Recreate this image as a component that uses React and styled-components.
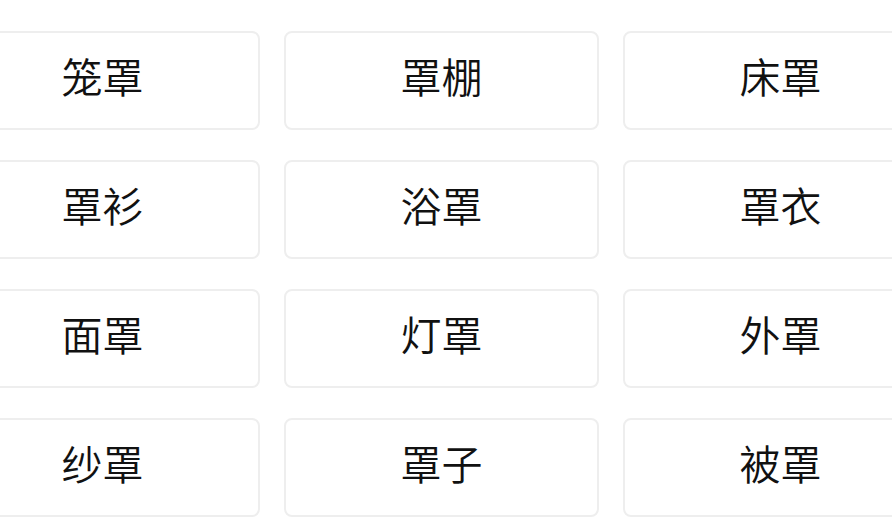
import React from 'react';
import styled, { createGlobalStyle } from 'styled-components';

const GlobalStyle = createGlobalStyle`
  html, body {
    margin: 0;
    padding: 0;
    background: #fff;
    overflow: hidden;
  }
  body {
    font-family: "Noto Sans CJK SC", "Noto Sans", sans-serif;
  }
`;

const Page = styled.div`
  width: 892px;
  height: 522px;
  overflow: hidden;
  background: #fff;
`;

const Grid = styled.div`
  display: grid;
  grid-template-columns: repeat(3, 315px);
  grid-auto-rows: 99px;
  column-gap: 24px;
  row-gap: 30px;
  margin-left: -55px;
  padding-top: 31px;
`;

const Card = styled.div`
  display: flex;
  align-items: center;
  justify-content: center;
  box-sizing: border-box;
  border: 2px solid #eeeeee;
  border-radius: 8px;
  background: #fff;
  font-size: 41px;
  font-weight: 350;
  line-height: 1;
  color: #111;
  padding-bottom: 11px;
`;

const words = [
  '笼罩', '罩棚', '床罩',
  '罩衫', '浴罩', '罩衣',
  '面罩', '灯罩', '外罩',
  '纱罩', '罩子', '被罩',
];

const App = () => {
  return (
    <Page>
      <GlobalStyle />
      <Grid>
        {words.map((w) => (
          <Card key={w}>{w}</Card>
        ))}
      </Grid>
    </Page>
  );
};

export default App;
